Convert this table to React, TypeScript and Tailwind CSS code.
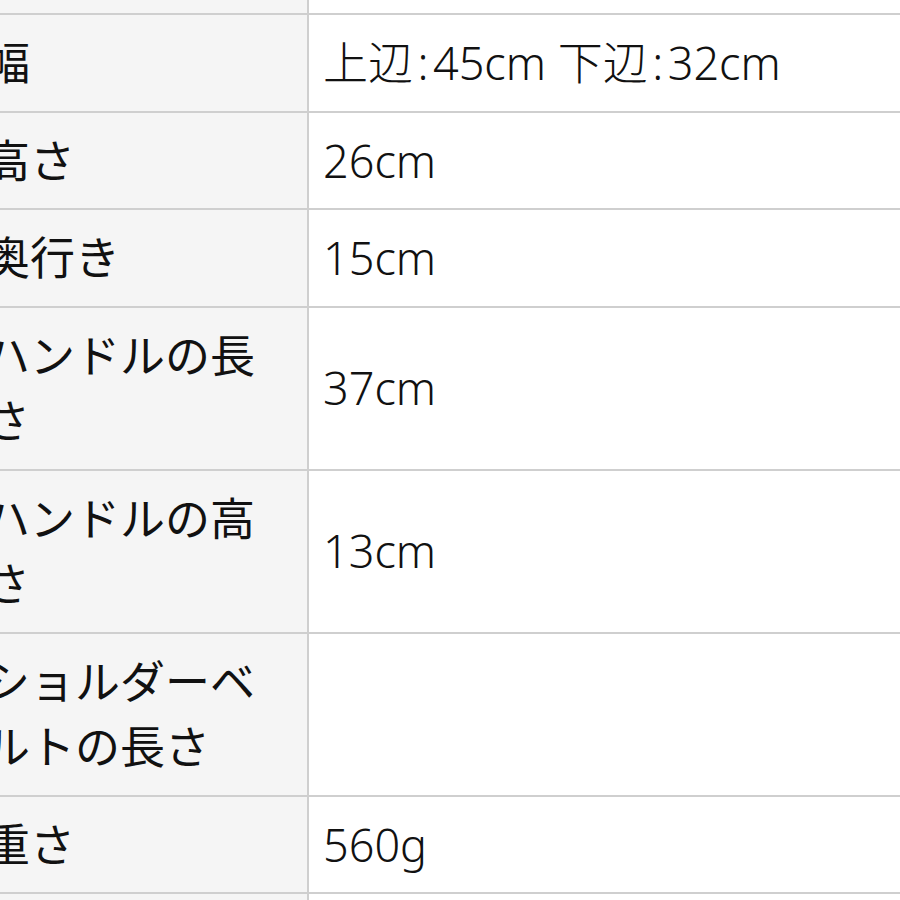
const rows: [string, string][] = [
  ['\u00a0', '\u00a0'],
  ['幅', '上辺\u200a:\u200a45cm 下辺\u200a:\u200a32cm'],
  ['高さ', '26cm'],
  ['奥行き', '15cm'],
  ['ハンドルの長さ', '37cm'],
  ['ハンドルの高さ', '13cm'],
  ['ショルダーベルトの長さ', '\u00a0'],
  ['重さ', '560g'],
  ['\u00a0', '\u00a0'],
];

export default function App() {
  return (
    <div className="w-[900px] h-[900px] overflow-hidden bg-white">
      <table className="table-fixed border-collapse w-[1000px] -ml-[31px] -mt-[84.5px] font-['Noto_Sans','Noto_Sans_CJK_JP',sans-serif] text-[45px] leading-[65.5px] text-[#111]">
        <colgroup>
          <col className="w-[338px]" />
          <col />
        </colgroup>
        <tbody>
          {rows.map(([label, value], i) => (
            <tr key={i}>
              <th className="border-2 border-[#cfcfcf] bg-[#f5f5f5] px-[14px] py-[15px] text-left font-normal align-middle">
                {label}
              </th>
              <td className="border-2 border-[#cfcfcf] bg-white px-[14px] py-[15px] align-middle font-light">
                {value}
              </td>
            </tr>
          ))}
        </tbody>
      </table>
    </div>
  );
}
